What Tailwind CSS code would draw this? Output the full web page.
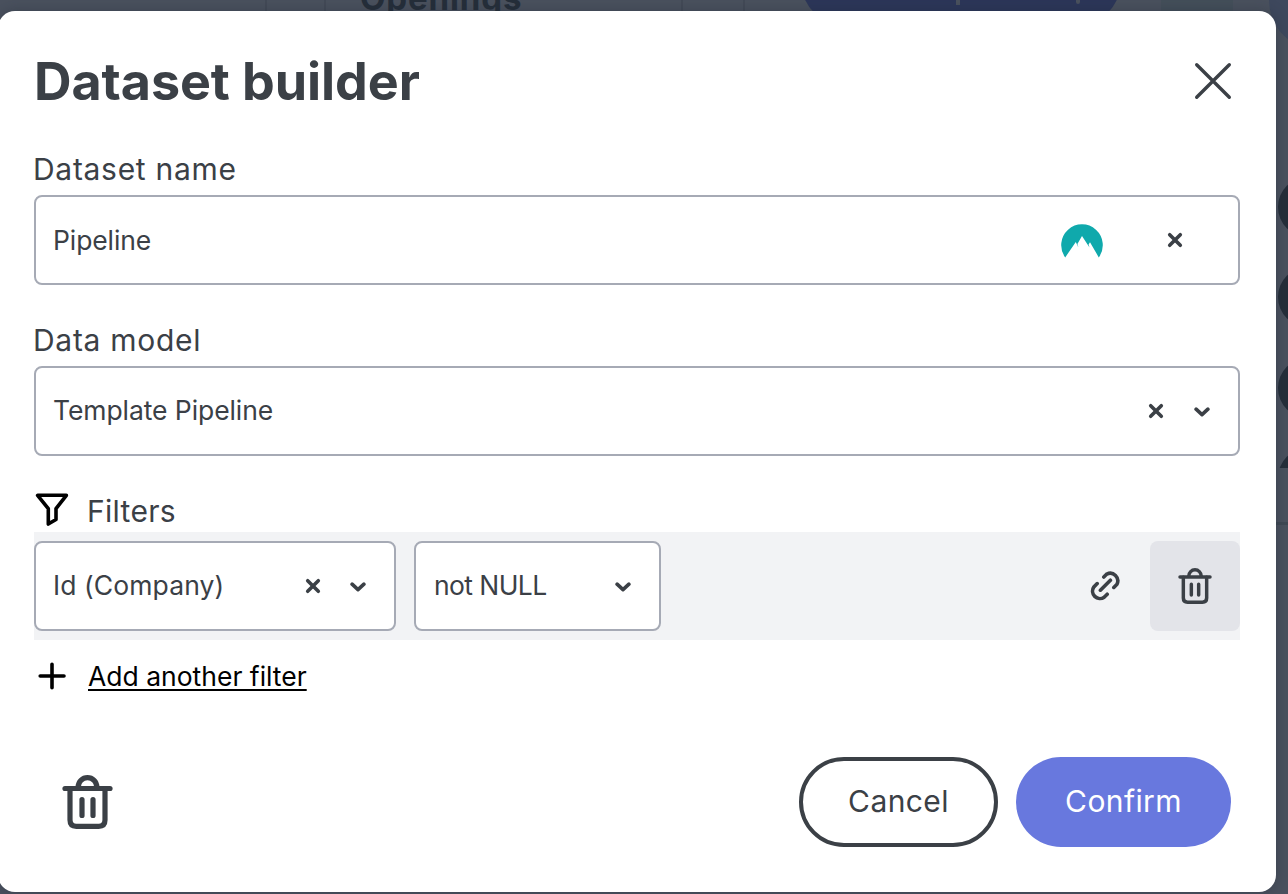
<!DOCTYPE html>
<html lang="en">
<head>
<meta charset="utf-8">
<title>Dataset builder</title>
<script src="https://cdn.jsdelivr.net/npm/@tailwindcss/browser@4"></script>
</head>
<body class="relative h-[894px] w-[1288px] overflow-hidden bg-[#4a515e] font-['Inter',sans-serif] text-[#3b4046]">
<svg class="hidden">
  <symbol id="trash" viewBox="0 0 51 54"><g fill="none" stroke="currentColor" stroke-width="5.2" stroke-linecap="round"><path d="M3 13.5h45"/><path d="M8 14v31q0 6.3 6.3 6.3h22.4q6.3 0 6.3-6.3V14M16.2 12a9.3 9.3 0 0 1 18.6 0M20 24.5v16M31 24.5v16"/></g></symbol>
  <symbol id="clear" viewBox="0 0 16 16"><path d="M2.7 2.7l10.6 10.6M13.3 2.7L2.7 13.3" fill="none" stroke="currentColor" stroke-width="3.6" stroke-linecap="round"/></symbol>
  <symbol id="chevron" viewBox="0 0 16 10"><path d="M2.1 2.2L8 7.6l5.9-5.4" fill="none" stroke="currentColor" stroke-width="3.6" stroke-linecap="round" stroke-linejoin="round"/></symbol>
</svg>

<!-- dimmed page behind the dialog -->
<div class="absolute inset-0 overflow-hidden" aria-hidden="true">
  <div class="absolute left-[265px] top-0 h-3 w-[61px] border-x-2 border-[#434a57]"></div>
  <div class="absolute left-[360px] top-[-20px] text-[33px] leading-[36px] font-bold tracking-[0.9px] text-[#252e3a]">Openings</div>
  <div class="absolute left-[681px] top-0 h-3 w-[64px] border-x-2 border-[#434a57]"></div>
  <div class="absolute left-[801px] top-[-64px] h-[90px] w-[320px] rounded-full bg-[#2c3659]"></div>
  <div class="absolute left-[956px] top-0 h-[5px] w-1 bg-[#4a515e]"></div>
  <div class="absolute left-[1076px] top-0 h-[4px] w-1 rounded-b bg-[#4a515e]"></div>
  <div class="absolute left-[1161px] top-0 h-3 w-[72px] bg-[#444f5a]"></div>
  <div class="absolute left-[1269px] top-[-50px] size-[100px] rounded-full bg-[#3e485d]"></div>
  <div class="absolute left-[1278px] top-[177px] size-[60px] rounded-full bg-[#252e3a]"></div>
  <div class="absolute left-[1278px] top-[267px] size-[60px] rounded-full bg-[#252e3a]"></div>
  <div class="absolute left-[1278px] top-[358px] size-[60px] rounded-full bg-[#252e3a]"></div>
  <div class="absolute left-[1276px] top-[448px] h-[20px] w-3 overflow-hidden"><div class="ml-[2px] size-[60px] rounded-full bg-[#252e3a]"></div></div>
  <div class="absolute left-[1276px] top-[522px] h-[3px] w-3 bg-[#3f4853]"></div>
</div>

<main class="relative mt-[11px] ml-[-2px] h-[881px] w-[1278px] rounded-[17px] bg-white px-[36px] shadow-[0_0_14px_rgba(30,36,50,0.35)]">
  <header class="flex h-[140px] items-center justify-between pr-[7px]">
    <h1 class="pt-px text-[52px] font-bold tracking-[-0.08px] whitespace-nowrap">Dataset builder</h1>
    <svg class="size-[40px]" viewBox="0 0 40 40" fill="none" stroke="currentColor" stroke-width="3.4" stroke-linecap="round"><path d="M3.7 3.7l32.6 32.6M36.3 3.7L3.7 36.3"/></svg>
  </header>

  <section>
    <label class="mb-2 -ml-px flex h-9 items-center text-[30px] tracking-[0.7px]">Dataset name</label>
    <div class="flex h-[90px] items-center rounded-lg border-2 border-[#a6aab5] pr-[55px] pl-[17px]">
      <span class="flex-1 pt-[2px] text-[26.5px] tracking-[-0.1px]">Pipeline</span>
      <svg class="mt-px mr-[64px] h-[34px] w-[42px]" viewBox="0 0 42 34"><path fill="#0fa9ac" d="M4.2 33.4A20.8 20.8 0 1 1 37.8 33.4L29 18.2l-1.4 2.3.9 2.9L21 12l-4.6 8.1 1 3.3-2.6-5.4z"/></svg>
      <svg class="size-4"><use href="#clear"/></svg>
    </div>
  </section>

  <section class="mt-[37px]">
    <label class="mb-2 -ml-px flex h-9 items-center text-[30px] tracking-[0.7px]">Data model</label>
    <div class="flex h-[90px] items-center rounded-lg border-2 border-[#a6aab5] pr-7 pl-[17px]">
      <span class="flex-1 text-[26.5px] tracking-[-0.08px]">Template Pipeline</span>
      <svg class="size-4"><use href="#clear"/></svg>
      <svg class="mt-[2px] ml-[30px] h-[10px] w-4"><use href="#chevron"/></svg>
    </div>
  </section>

  <section class="mt-[37px]">
    <div class="mb-[3px] flex h-9 items-center">
      <svg class="mr-[17px] h-9 w-9 text-black" viewBox="0 0 36 36" fill="none" stroke="currentColor" stroke-width="3.6" stroke-linejoin="round"><path d="M3.6 2.3H32.4L22 15.6V26.5L14.3 31V15.6z"/></svg>
      <span class="text-[30px] tracking-[0.3px]">Filters</span>
    </div>
    <div class="flex h-[108px] items-center bg-[#f2f3f5]">
      <div class="flex h-[90px] w-[362px] items-center rounded-lg border-2 border-[#a6aab5] bg-white pr-7 pl-[17px]">
        <span class="flex-1 text-[26.5px] tracking-[0.1px] whitespace-nowrap">Id (Company)</span>
        <svg class="size-4"><use href="#clear"/></svg>
        <svg class="mt-[2px] ml-[29px] h-[10px] w-4"><use href="#chevron"/></svg>
      </div>
      <div class="ml-[18px] flex h-[90px] w-[247px] items-center rounded-lg border-2 border-[#a6aab5] bg-white pr-7 pl-[18px]">
        <span class="flex-1 text-[26.5px] tracking-[-0.6px] whitespace-nowrap">not NULL</span>
        <svg class="mt-[2px] h-[10px] w-4"><use href="#chevron"/></svg>
      </div>
      <svg class="mr-[29px] mb-[2px] ml-auto size-8" viewBox="0 0 32 32" fill="none" stroke="currentColor" stroke-width="3.6" stroke-linecap="round"><path d="M14.8 8.1l3-3A7.6 7.6 0 0 1 28 15.2l-3.2 3.2M8.2 14.6l-3.3 3.3A7.4 7.4 0 0 0 15.2 28.2l3-3M11.4 21.2l10-10"/></svg>
      <div class="flex size-[90px] items-center justify-center rounded-lg bg-[#e3e4e9]"><svg class="h-[36px] w-[34px]"><use href="#trash"/></svg></div>
    </div>
    <div class="mt-[18px] flex h-9 items-center text-black">
      <svg class="mr-[18px] size-9" viewBox="0 0 36 36" fill="none" stroke="currentColor" stroke-width="3.6" stroke-linecap="round"><path d="M18 6.2v23.5M6.2 18h23.8"/></svg>
      <span class="pt-[2px] text-[26.5px] underline decoration-2 underline-offset-[3px] [text-decoration-skip-ink:none]">Add another filter</span>
    </div>
  </section>

  <footer class="mt-[63px] flex h-[90px] items-center pr-[9px] pl-[28.4px]">
    <svg class="h-[54px] w-[51px]"><use href="#trash"/></svg>
    <button class="ml-auto h-[90px] w-[199px] rounded-full border-4 pb-[2px] text-[30px] tracking-[0.4px]">Cancel</button>
    <button class="ml-[18px] h-[90px] w-[215px] rounded-full bg-[#6878de] pb-[2px] text-[30px] tracking-[0.4px] text-white">Confirm</button>
  </footer>
</main>
</body>
</html>
